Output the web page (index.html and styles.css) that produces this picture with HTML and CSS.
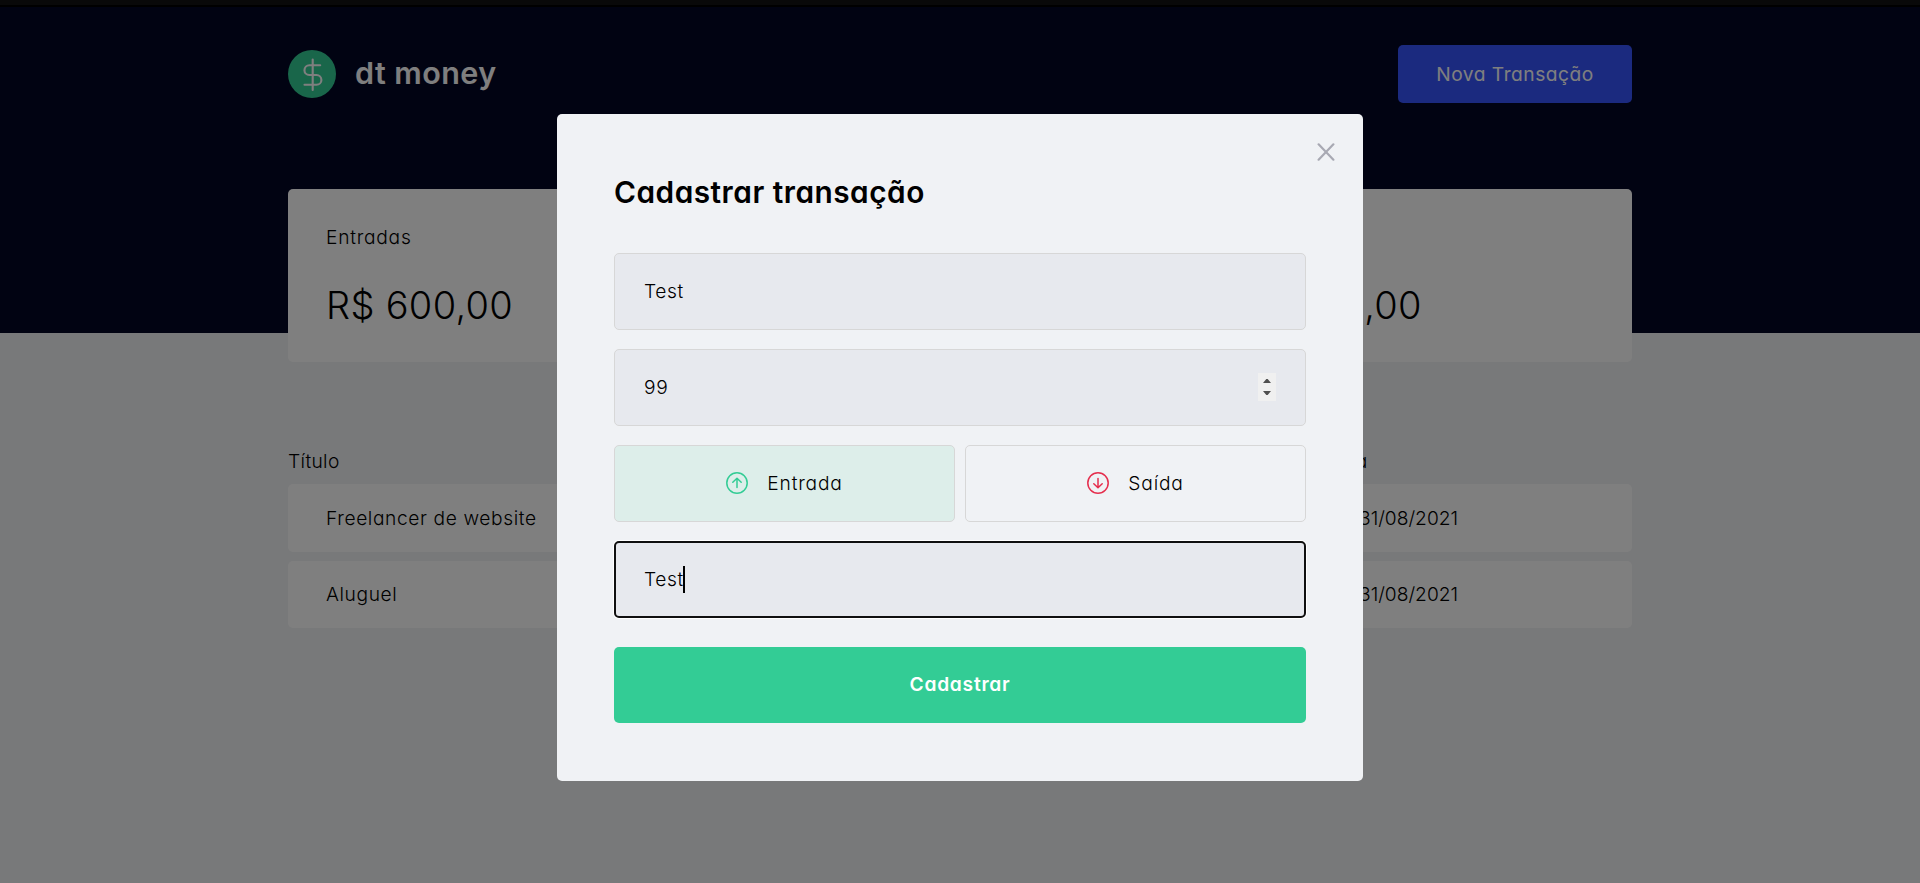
FILE: index.html
```
<!DOCTYPE html>
<html lang="pt-BR">
<head>
<meta charset="utf-8">
<title>dt money</title>
<link rel="stylesheet" href="styles.css">
</head>
<body>
<div class="topbar"></div>
<header class="header">
  <div class="container header-content">
    <div class="brand">
      <svg class="logo" viewBox="0 0 48 48" fill="none"><circle cx="24" cy="24" r="24" fill="#33cc95"/><path d="M24.7 9.500v30.500M32.2 15.300H21.300a4.850 4.850 0 0 0 0 9.700h7.200a4.900 4.900 0 0 1 0 9.800H16.500" stroke="#fff" stroke-width="2.100" stroke-linecap="round"/></svg>
      <span class="brand-name">dt money</span>
    </div>
    <button class="new-button"><span>Nova Transação</span></button>
  </div>
</header>
<main class="container">
  <section class="summary">
    <div class="card"><p class="label">Entradas</p><strong class="amount">R$ 600,00</strong></div>
    <div class="card"><p class="label">Saídas</p><strong class="amount">R$ 500,00</strong></div>
    <div class="card"><p class="label">Total</p><strong class="amount total">R$ 100,00</strong></div>
  </section>
  <section class="transactions">
    <div class="row head"><span class="title">Título</span><span class="date">Data</span></div>
    <div class="row"><span>Freelancer de website</span><span class="date">31/08/2021</span></div>
    <div class="row last"><span>Aluguel</span><span class="date">31/08/2021</span></div>
  </section>
</main>
<div class="overlay">
  <form class="modal">
    <svg class="close" viewBox="0 0 18 18"><path d="M1.600 1.300l14.800 15.400M16.400 1.300L1.600 16.700" stroke="#a8a9b3" stroke-width="2.200" stroke-linecap="round"/></svg>
    <h2 class="modal-title"><span>Cadastrar transação</span></h2>
    <div class="field"><span>Test</span></div>
    <div class="field"><span>99</span>
      <svg class="spinner" viewBox="0 0 18 28"><path fill="#f0f0f0" d="M0 0h18v28H0z"/><path fill="#505050" d="M5 10h8L9.700 6H8.300zM5 18h8l-3.300 4H8.300z"/></svg>
    </div>
    <div class="types">
      <div class="type active"><svg class="type-icon" viewBox="0 0 22 22" fill="none" stroke="#33cc95" stroke-width="1.500" stroke-linecap="round" stroke-linejoin="round"><circle cx="11" cy="11" r="10.200"/><path d="M11 15.500V6.500M6.800 10.300L11 6.200l4.200 4.100"/></svg><span class="type-name">Entrada</span></div>
      <div class="type"><svg class="type-icon" viewBox="0 0 22 22" fill="none" stroke="#e52e4d" stroke-width="1.500" stroke-linecap="round" stroke-linejoin="round"><circle cx="11" cy="11" r="10.200"/><path d="M11 6.500v9M6.800 11.700l4.200 4.100 4.200-4.100"/></svg><span class="type-name">Saída</span></div>
    </div>
    <div class="field focused"><span>Test</span><i class="caret"></i></div>
    <div class="submit"><span>Cadastrar</span></div>
  </form>
</div>
</body>
</html>
```
FILE: styles.css
```
* { box-sizing: border-box; margin: 0; padding: 0; }
body {
  height: 883px; overflow: hidden; background: #f0f2f5; color: #000;
  font: 300 19.200px/28.800px Inter, "Open Sans", sans-serif;
  font-feature-settings: "cv11";
  letter-spacing: .6px;
}
span { white-space: nowrap; }
.topbar { height: 7px; background: #121212; border-bottom: 2px solid #000; }
.header { height: 326px; background: #030624; padding-top: 38px; }
.container { width: 1344px; margin: 0 auto; }
.header-content { display: flex; justify-content: space-between; align-items: flex-start; }
.brand { display: flex; align-items: center; gap: 19px; padding-top: 5px; }
.logo { width: 48px; height: 48px; }
.brand-name { font-size: 30.500px; font-weight: 600; color: #fff; letter-spacing: .450px; padding-bottom: 2px; }
.new-button { width: 234px; height: 58px; border: 0; border-radius: 5px; background: #3654ff; color: #fff; font: inherit; font-weight: 400; font-feature-settings: inherit; letter-spacing: .5px; }
.summary { display: grid; grid-template-columns: repeat(3, 1fr); gap: 38.400px; margin-top: -144px; }
.card { height: 173px; padding: 34px 38px 0; border-radius: 5px; background: #fff; }
.label { letter-spacing: .750px; }
.amount { display: block; font-size: 38px; font-weight: 300; line-height: 58px; margin-top: 24px; white-space: nowrap; letter-spacing: .3px; }
.total { margin-left: -5px; }
.transactions { display: flex; flex-direction: column; gap: 9px; margin-top: 76px; }
.row { display: grid; grid-template-columns: 1033px auto; align-items: center; height: 68px; padding: 0 38px; border-radius: 5px; background: #fff; }
.row.last { height: 67px; }
.row.head { height: 37px; padding: 0 0 9px; background: none; line-height: 28px; }
.head .title { letter-spacing: .350px; padding-top: 9px; }
.head .date { letter-spacing: 1.300px; padding-top: 9px; }
.date { letter-spacing: 0; }
.overlay { position: fixed; inset: 0; display: flex; justify-content: center; align-items: flex-start; padding-top: 114px; background: rgba(0, 0, 0, .5); }
.modal { position: relative; width: 806px; height: 667px; padding: 57px; border-radius: 5px; background: #f0f2f5; display: flex; flex-direction: column; }
.close { position: absolute; top: 29px; right: 28px; width: 18px; height: 18px; }
.modal-title { font-size: 29.800px; font-weight: 600; line-height: 43px; margin-bottom: 39px; letter-spacing: .5px; }
.field, .type { display: flex; align-items: center; height: 77px; border: 1px solid #d7d7d7; border-radius: 5px; }
.field { padding: 0 29px; background: #e7e9ee; margin-bottom: 19px; }
.spinner { width: 18px; height: 28px; margin: 0 0 1px auto; }
.types { display: grid; grid-template-columns: 1fr 1fr; gap: 10px; margin-bottom: 19px; }
.type { justify-content: center; gap: 19px; }
.type-name { letter-spacing: .8px; }
.type.active { background: #ddeeea; }
.type-icon { width: 22px; height: 22px; margin-bottom: 1px; }
.focused { border: 2px solid #101010; padding-left: 28px; margin-bottom: 29px; box-shadow: 0 0 0 1px #fff; }
.caret { width: 2px; height: 27px; margin-left: -1px; background: #000; }
.submit { display: flex; align-items: center; justify-content: center; height: 76px; padding-bottom: 2px; border-radius: 5px; background: #33cc95; color: #fff; font-weight: 600; letter-spacing: .750px; }
```
